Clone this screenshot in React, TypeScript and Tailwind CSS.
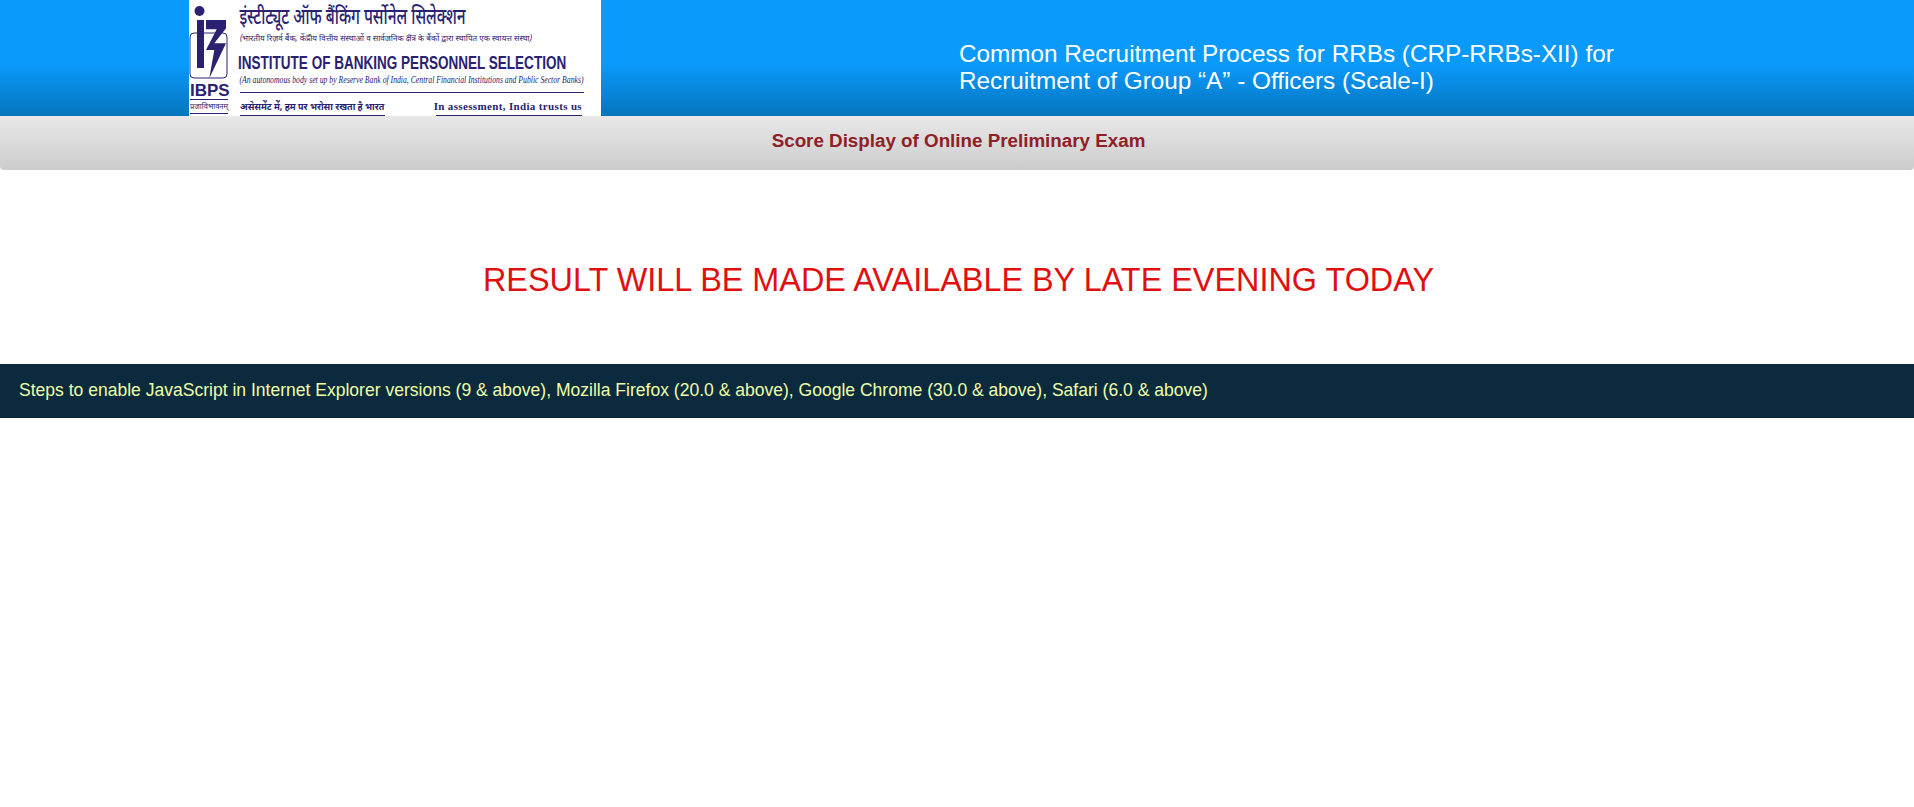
export default function App() {
  return (
    <div className="min-h-[807px] bg-white font-['Liberation_Sans',Arial,sans-serif]">
      <header className="flex h-[116px] bg-[linear-gradient(#0a9afc_0%,#0a9afc_55%,#0675bd_100%)]">
        <div className="ml-[189px] flex h-[116px] w-[412px] overflow-hidden bg-white pl-[1px]">
          <div className="flex w-[48px] shrink-0 flex-col items-start text-[#2a2270]">
            <svg viewBox="0 0 42 76" className="-ml-[2px] mt-[5px] h-[76px] w-[42px]">
              <circle cx="11.5" cy="6" r="5" fill="#2a2270" />
              <rect x="2" y="28" width="37" height="45" rx="4" fill="none" stroke="#2a2270" strokeWidth="1" />
              <rect x="9" y="15" width="7" height="48" fill="#2a2270" />
              <path d="M18 15H38V23.3L26.3 38.3H38L21.3 73.3L26.3 45H18L28.7 24.3H18Z" fill="#2a2270" />
            </svg>
            <div className="mt-[2px] w-[38px] text-center text-[17px] leading-[15px] font-bold">IBPS</div>
            <div className="mt-[1px] w-[38px] border-y border-[#2a2270] text-center font-['Noto_Sans',sans-serif] text-[7.5px] leading-[13px] whitespace-nowrap">प्रजाविभावनम्</div>
          </div>
          <div className="flex w-[346px] shrink-0 flex-col text-[#2a2270]">
            <div className="h-[30px] origin-left scale-x-[0.7] pl-[2px] font-['Noto_Sans',sans-serif] text-[22px] leading-[30px] font-medium whitespace-nowrap">इंस्टीट्यूट ऑफ बैंकिंग पर्सोनेल सिलेक्शन</div>
            <div className="h-[16px] origin-left scale-x-[0.95] pl-[2px] font-['Noto_Sans',sans-serif] text-[8.5px] leading-[16px] whitespace-nowrap italic">(भारतीय रिज़र्व बैंक, केंद्रीय वित्तीय संस्थाओं व सार्वजनिक क्षेत्र के बैंकों द्वारा स्थापित एक स्वायत्त संस्था)</div>
            <div className="mt-[7px] h-[20px] origin-left scale-x-[0.712] text-[19px] leading-[20px] font-bold whitespace-nowrap">INSTITUTE OF BANKING PERSONNEL SELECTION</div>
            <div className="h-[14px] origin-left scale-x-[0.735] pl-[2px] font-['Liberation_Serif',serif] text-[10.5px] leading-[14px] whitespace-nowrap italic">(An autonomous body set up by Reserve Bank of India, Central Financial Institutions and Public Sector Banks)</div>
            <div className="mt-[5px] ml-[2px] border-t border-[#2a2270]" />
            <div className="flex h-[20px] items-end justify-between px-[2px] text-[10px] leading-[14px] font-bold whitespace-nowrap">
              <span className="origin-left scale-x-[0.9] font-['Noto_Sans',sans-serif]">असेसमेंट में, हम पर भरोसा रखता है भारत</span>
              <span className="font-['Liberation_Serif',serif] text-[11px] tracking-[0.35px]">In assessment, India trusts us</span>
            </div>
            <div className="mt-[2px] flex justify-between px-[2px]">
              <div className="w-[145px] border-t border-[#2a2270]" />
              <div className="w-[146px] border-t border-[#2a2270]" />
            </div>
          </div>
        </div>
        <div className="ml-[358px] pt-[40px] text-[24.3px] leading-[27px] text-white">
          Common Recruitment Process for RRBs (CRP-RRBs-XII) for
          <br />
          Recruitment of Group “A” - Officers (Scale-I)
        </div>
      </header>

      <div className="flex h-[54px] items-center justify-center rounded-b-[4px] bg-[linear-gradient(#e8e8e8,#cccccc)] pb-[3px] pl-[3px] text-[18.8px] font-bold text-[#8f2025]">
        Score Display of Online Preliminary Exam
      </div>

      <div className="flex h-[194px] justify-center pt-[90px] pl-[3px] text-[32.4px] leading-[40px] text-[#e01010]">
        RESULT WILL BE MADE AVAILABLE BY LATE EVENING TODAY
      </div>

      <div className="flex h-[54px] items-center bg-[#0b2a3d] pb-[1px] pl-[19px] text-[17.55px] text-[#eeffaa]">
        Steps to enable JavaScript in Internet Explorer versions (9 &amp; above), Mozilla Firefox (20.0 &amp; above), Google Chrome (30.0 &amp; above), Safari (6.0 &amp; above)
      </div>
    </div>
  );
}
